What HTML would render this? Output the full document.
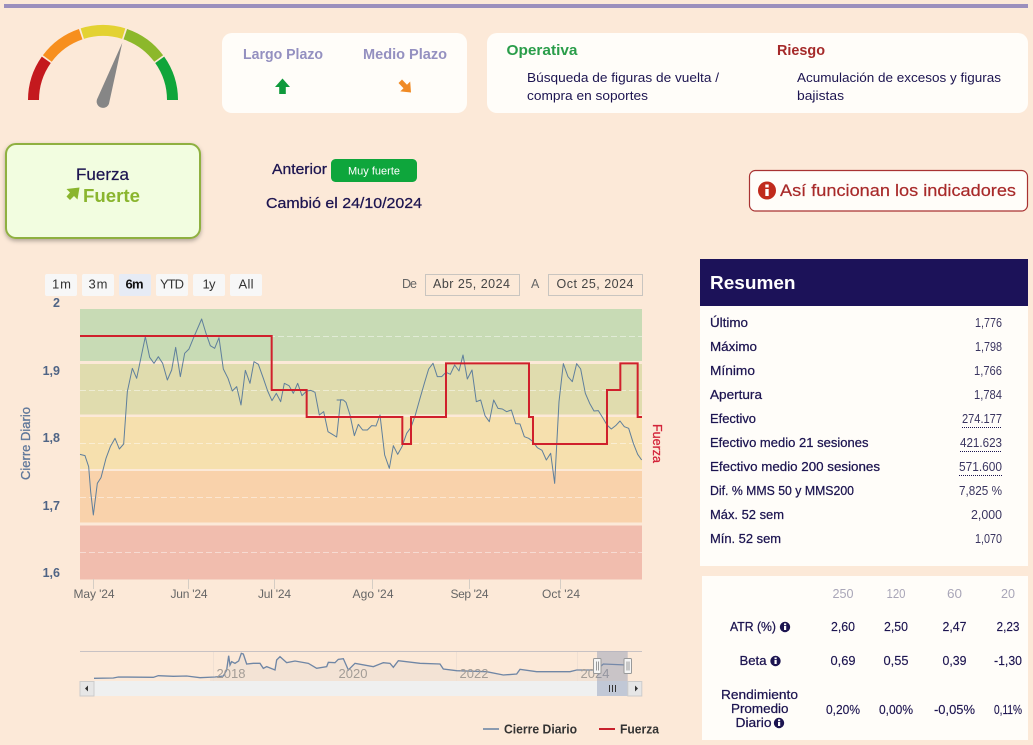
<!DOCTYPE html>
<html lang="es">
<head>
<meta charset="utf-8">
<title>Fuerza - Resumen</title>
<style>
html,body{margin:0;padding:0;width:1033px;height:745px;overflow:hidden;background:#fce9d8}
svg{display:block}
text{font-family:"Liberation Sans",sans-serif;fill:#1c1450}
.m{stroke:#1c1450;stroke-width:.25px;font-size:13px}
.v{font-size:13px;fill:#3a3560;text-anchor:start}
.h{font-size:13px;fill:#a9a6b8;text-anchor:middle}
.n{font-size:13px;text-anchor:middle;stroke:#1c1450;stroke-width:.15px}
.b{font-size:13px;fill:#333;text-anchor:middle}
.ax{font-size:12.5px;fill:#4f6485;font-weight:bold;text-anchor:end}
.xl{font-size:12px;fill:#666;text-anchor:middle}
.nv{font-size:13px;fill:#a39d97;text-anchor:middle}
.d{font-size:12.5px;fill:#444}
</style>
</head>
<body>
<svg width="1033" height="745" viewBox="0 0 1033 745" xmlns="http://www.w3.org/2000/svg">
<defs>
<filter id="sh" x="-10%" y="-10%" width="120%" height="125%"><feDropShadow dx="0" dy="2" stdDeviation="2" flood-color="#000" flood-opacity=".3"/></filter>
<g id="inf"><circle r="5.2" fill="#1c1450"/><rect x="-1" y="-1" width="2.2" height="4" fill="#fff"/><rect x="-1" y="-3.6" width="2.2" height="1.8" fill="#fff"/></g>
</defs>
<rect width="1033" height="745" fill="#fce9d8"/>
<rect x="4" y="4" width="1024" height="4" fill="#9b8fbd"/>

<!-- gauge -->
<g fill="none" stroke-width="11">
<path d="M33.5 100A69.5 69.5 0 0 1 46.3 59.8" stroke="#c4191e"/>
<path d="M47.3 58.5A69.5 69.5 0 0 1 80.7 34.2" stroke="#f78f1e"/>
<path d="M82.3 33.6A69.5 69.5 0 0 1 123.7 33.6" stroke="#e3d232"/>
<path d="M125.3 34.2A69.5 69.5 0 0 1 158.7 58.5" stroke="#8cb82b"/>
<path d="M159.7 59.8A69.5 69.5 0 0 1 172.5 100" stroke="#0fa53a"/>
</g>
<path d="M122.3 42.7L109 103.6A6.2 6.2 0 0 1 97 99.4Z" fill="#868686"/>

<!-- plazo card -->
<rect x="222" y="33" width="245" height="80" rx="10" fill="#fffdf9"/>
<text x="243" y="59" font-size="15" font-weight="bold" style="fill:#9490c0" textLength="80" lengthAdjust="spacingAndGlyphs">Largo Plazo</text>
<text x="363" y="59" font-size="15" font-weight="bold" style="fill:#9490c0" textLength="84" lengthAdjust="spacingAndGlyphs">Medio Plazo</text>
<path d="M282.5 78.5L290 87H285.8V94H279.2V87H275Z" fill="#0f9a3c"/>
<path d="M411 92.5L410.2 81.5L407 84.7L402 79.5L398.5 83L403.5 88.2L400.3 91.4Z" fill="#f08a24"/>

<!-- operativa card -->
<rect x="487" y="33" width="541" height="80" rx="10" fill="#fffdf9"/>
<text x="506.5" y="55" font-size="15" font-weight="bold" style="fill:#2a9d4a" textLength="71" lengthAdjust="spacingAndGlyphs">Operativa</text>
<text x="777" y="55" font-size="15" font-weight="bold" style="fill:#a52a2a" textLength="48" lengthAdjust="spacingAndGlyphs">Riesgo</text>
<text x="527" y="82" font-size="13" textLength="192" lengthAdjust="spacingAndGlyphs">Búsqueda de figuras de vuelta /</text>
<text x="527" y="100" font-size="13" textLength="121" lengthAdjust="spacingAndGlyphs">compra en soportes</text>
<text x="797" y="82" font-size="13" textLength="204" lengthAdjust="spacingAndGlyphs">Acumulación de excesos y figuras</text>
<text x="797" y="100" font-size="13" textLength="47" lengthAdjust="spacingAndGlyphs">bajistas</text>

<!-- fuerza card -->
<rect x="6" y="144" width="194" height="94" rx="10" fill="#f2fde0" stroke="#8fb040" stroke-width="2" filter="url(#sh)"/>
<text x="76" y="180" font-size="16.5" style="stroke:#1c1450;stroke-width:.2px" textLength="53" lengthAdjust="spacingAndGlyphs">Fuerza</text>
<path d="M79.5 187.5L66.5 189L70 192.5L66.5 196.5L70 200L74 196L77.5 199.5Z" fill="#8ab52e"/>
<text x="83" y="202" font-size="18.5" font-weight="bold" style="fill:#8ab52e" textLength="57" lengthAdjust="spacingAndGlyphs">Fuerte</text>

<text x="272" y="174" font-size="14.5" style="stroke:#1c1450;stroke-width:.25px" textLength="55" lengthAdjust="spacingAndGlyphs">Anterior</text>
<rect x="331" y="159" width="86" height="23" rx="4.5" fill="#0ea63c"/>
<text x="348" y="174.5" font-size="11" style="fill:#fff" textLength="52" lengthAdjust="spacingAndGlyphs">Muy fuerte</text>
<text x="266" y="208" font-size="14.5" style="stroke:#1c1450;stroke-width:.25px" textLength="156" lengthAdjust="spacingAndGlyphs">Cambió el 24/10/2024</text>

<!-- button -->
<rect x="749.5" y="170.5" width="278" height="40.5" rx="6" fill="#fffdf9" stroke="#a83232" stroke-width="1.2"/>
<circle cx="767" cy="190.5" r="9" fill="#c02a1c"/>
<rect x="765.3" y="189" width="3.4" height="7" fill="#fff"/><rect x="765.3" y="184.5" width="3.4" height="3" fill="#fff"/>
<text x="780" y="196" font-size="16.5" style="fill:#a82a2a;stroke:#a82a2a;stroke-width:.2px" textLength="236" lengthAdjust="spacingAndGlyphs">Así funcionan los indicadores</text>

<!-- range selector -->
<g fill="#f7f7f7">
<rect x="45" y="274" width="32" height="22" rx="2"/>
<rect x="82" y="274" width="32" height="22" rx="2"/>
<rect x="119" y="274" width="32" height="22" rx="2" fill="#e6ebf5"/>
<rect x="156" y="274" width="32" height="22" rx="2"/>
<rect x="193" y="274" width="32" height="22" rx="2"/>
<rect x="230" y="274" width="32" height="22" rx="2"/>
</g>
<text class="b" x="61.5" y="288.5" textLength="19">1m</text>
<text class="b" x="98" y="288.5" textLength="19">3m</text>
<text class="b" x="134.5" y="288.5" font-weight="bold" style="fill:#111" textLength="18">6m</text>
<text class="b" x="172" y="288.5" textLength="24">YTD</text>
<text class="b" x="209" y="288.5" textLength="13">1y</text>
<text class="b" x="246" y="288.5" textLength="15">All</text>

<text class="d" x="402" y="288" style="fill:#666" textLength="15">De</text>
<rect x="425.5" y="274.5" width="94" height="21" fill="none" stroke="#c9c5c0"/>
<text class="d" x="433" y="288" textLength="77">Abr 25, 2024</text>
<text class="d" x="531" y="288" style="fill:#666" textLength="8">A</text>
<rect x="548.5" y="274.5" width="94" height="21" fill="none" stroke="#c9c5c0"/>
<text class="d" x="556.5" y="288" textLength="77">Oct 25, 2024</text>

<!-- plot bands -->
<rect x="80" y="309" width="562" height="52" fill="#c8dbb5"/>
<rect x="80" y="364" width="562" height="50.5" fill="#e0dcae"/>
<rect x="80" y="417" width="562" height="52" fill="#f6e0ae"/>
<rect x="80" y="471" width="562" height="51.5" fill="#f9d2ab"/>
<rect x="80" y="525.5" width="562" height="54" fill="#f1bdae"/>
<g stroke="#fff" stroke-opacity=".45" stroke-dasharray="6 3">
<path d="M80 336.5H642"/><path d="M80 390.5H642"/><path d="M80 443.5H642"/><path d="M80 497.5H642"/><path d="M80 552.5H642"/>
</g>

<!-- ticks -->
<g stroke="#d5cdc4"><path d="M93.5 579V589M188.5 579V589M274.5 579V589M372.5 579V589M469.5 579V589M560.5 579V589"/></g>

<!-- axis labels -->
<text class="ax" x="60" y="307">2</text>
<text class="ax" x="60" y="375">1,9</text>
<text class="ax" x="60" y="442">1,8</text>
<text class="ax" x="60" y="510">1,7</text>
<text class="ax" x="60" y="577">1,6</text>
<text transform="translate(30 443.5) rotate(-90)" font-size="13" text-anchor="middle" style="fill:#5f779a;stroke:#5f779a;stroke-width:.3px" textLength="73" lengthAdjust="spacingAndGlyphs">Cierre Diario</text>
<text transform="translate(653 443.5) rotate(90)" font-size="13" text-anchor="middle" style="fill:#d3243a;stroke:#d3243a;stroke-width:.3px" textLength="39" lengthAdjust="spacingAndGlyphs">Fuerza</text>
<text class="xl" x="94" y="598" textLength="41">May '24</text>
<text class="xl" x="189" y="598" textLength="37">Jun '24</text>
<text class="xl" x="274.5" y="598" textLength="33">Jul '24</text>
<text class="xl" x="373" y="598" textLength="41">Ago '24</text>
<text class="xl" x="469.5" y="598" textLength="38">Sep '24</text>
<text class="xl" x="561" y="598" textLength="38">Oct '24</text>

<!-- price line -->
<g transform="translate(0 265) scale(.33333)" fill="none" stroke="#5f7f9c" stroke-width="3" stroke-linejoin="round">
<polyline points="240,568 255,572 266,605 272,680 280,750 292,655 303,638 318,580 331,545 345,520 358,552 371,537 382,380 397,310 410,340 436,215 449,277 462,295 475,275 488,295 502,345 515,315 527,247 541,335 554,265 567,252 580,220 605,162 618,205 631,242 644,250 657,218 670,312 684,340 697,378 710,365 723,420 736,316 750,355 762,290 775,298 790,340 803,378 816,407 829,385 842,410 853,355 867,362 880,385 893,355 906,392 920,378 932,376 945,382 958,450 971,440 984,500 997,508 1010,516 1022,404 1030,405"/>
</g>
<g transform="translate(340 265) scale(.33333)" fill="none" stroke="#5f7f9c" stroke-width="3" stroke-linejoin="round">
<polyline points="-10,405 10,405 18,412 30,450 43,512 55,478 68,495 82,495 95,482 108,483 120,450 134,570 148,610 160,542 173,568 186,545 200,505 213,487 226,450 240,400 253,355 266,312 279,295 292,335 305,335 318,322 331,328 344,300 357,318 369,270 382,342 396,315 409,410 422,405 435,452 448,470 461,405 474,430 487,432 500,440 514,435 527,476 540,477 553,515 566,520 579,530 592,548 606,556 619,585 632,565 644,655 657,410 670,296 684,335 697,350 710,296 722,312 736,385 749,415 762,438 775,437 788,458 801,480 814,492 827,482 840,468 853,485 866,490 880,535 893,568 905,585"/>
</g>
<!-- fuerza step line -->
<g transform="translate(0 265) scale(.33333)" fill="none" stroke="#d0202c" stroke-width="6">
<path d="M240 213H815V375H920V456H1207V537H1233V456H1338V295H1587V456H1599V537H1821V375H1861V295H1913V456H1926"/>
</g>

<!-- navigator -->
<g transform="translate(0 500) scale(.33333)">
<polygon fill="#f3e3d5" points="630,543 630,531 645,531 670,528 680,510 686,467 690,495 695,485 705,490 716,483 724,460 730,462 740,492 760,490 780,490 790,505 800,500 825,510 830,480 840,470 860,488 885,483 925,490 950,505 980,500 985,487 1005,488 1015,478 1030,476 1045,510 1065,490 1120,500 1150,488 1170,490 1180,502 1195,482 1260,490 1320,492 1330,507 1370,512 1460,515 1510,525 1550,522 1560,508 1610,515 1710,515 1730,510 1791,510 1791,543"/>
</g>
<path d="M80 651.5H642" stroke="#c8c2c4" fill="none"/>
<path d="M456.5 652V681M577.5 652V681M213.5 652V681" stroke="#f0e0d3" fill="none"/>
<g transform="translate(0 500) scale(.33333)" fill="none" stroke="#6f86a5" stroke-width="4">
<polyline points="282,535 340,534 355,531 460,532 475,527 520,529 560,528 600,533 645,531 670,528 680,510 686,467 690,495 695,485 705,490 716,483 724,460 730,462 740,492 760,490 780,490 790,505 800,500 825,510 830,480 840,470 860,488 885,483 925,490 950,505 980,500 985,487 1005,488 1015,478 1030,476 1045,510 1065,490 1120,500 1150,488 1170,490 1180,502 1195,482 1260,490 1320,492 1330,507 1370,512 1460,515 1510,525 1550,522 1560,508 1610,515 1710,515 1730,510 1790,510 1810,492 1880,495"/>
</g>
<text class="nv" x="231" y="678">2018</text>
<text class="nv" x="353" y="678">2020</text>
<text class="nv" x="474" y="678">2022</text>
<text class="nv" x="595" y="678">2024</text>
<rect x="80" y="681" width="562" height="15" fill="#eff0f0"/>
<rect x="597" y="651.5" width="30.7" height="44.5" fill="#7c8bb0" fill-opacity=".4"/>
<rect x="80" y="681.5" width="14" height="14.5" fill="#e6e6e6" stroke="#ccc"/>
<path d="M85 688.5L88 685.5V691.5Z" fill="#333"/>
<rect x="627.8" y="681.5" width="14" height="14.5" fill="#e6e6e6" stroke="#ccc"/>
<path d="M638 688.5L635 685.5V691.5Z" fill="#333"/>
<path d="M609.5 685V692M612.5 685V692M615.5 685V692" stroke="#333"/>
<rect x="593.5" y="658.5" width="7.5" height="15" rx="1" fill="#f5f5f5" stroke="#999"/>
<path d="M596.5 661.5V670.5M598.5 661.5V670.5" stroke="#999"/>
<rect x="624" y="658.5" width="7.5" height="15" rx="1" fill="#f5f5f5" stroke="#999"/>
<path d="M627 661.5V670.5M629 661.5V670.5" stroke="#999"/>

<!-- legend -->
<path d="M483 729H499" stroke="#8b9bb0" stroke-width="2"/>
<text x="504" y="733.5" font-size="12.5" font-weight="bold" style="fill:#333" textLength="73" lengthAdjust="spacingAndGlyphs">Cierre Diario</text>
<path d="M599 729H615" stroke="#c8202c" stroke-width="2"/>
<text x="620" y="733.5" font-size="12.5" font-weight="bold" style="fill:#333" textLength="39" lengthAdjust="spacingAndGlyphs">Fuerza</text>

<!-- resumen -->
<rect x="700" y="259" width="328" height="47" fill="#1c1259"/>
<text x="710" y="289" font-size="18.5" font-weight="bold" style="fill:#fff" textLength="85.5" lengthAdjust="spacingAndGlyphs">Resumen</text>
<rect x="700" y="306" width="328" height="260" fill="#fffdf9"/>
<text class="m" x="710" y="327" textLength="38" lengthAdjust="spacingAndGlyphs">Último</text>
<text class="m" x="710" y="351" textLength="47" lengthAdjust="spacingAndGlyphs">Máximo</text>
<text class="m" x="710" y="375" textLength="45" lengthAdjust="spacingAndGlyphs">Mínimo</text>
<text class="m" x="710" y="399" textLength="52" lengthAdjust="spacingAndGlyphs">Apertura</text>
<text class="m" x="710" y="423" textLength="46" lengthAdjust="spacingAndGlyphs">Efectivo</text>
<text class="m" x="710" y="447" textLength="158.5" lengthAdjust="spacingAndGlyphs">Efectivo medio 21 sesiones</text>
<text class="m" x="710" y="471" textLength="170" lengthAdjust="spacingAndGlyphs">Efectivo medio 200 sesiones</text>
<text class="m" x="710" y="495" textLength="144" lengthAdjust="spacingAndGlyphs">Dif. % MMS 50 y MMS200</text>
<text class="m" x="710" y="519" textLength="74" lengthAdjust="spacingAndGlyphs">Máx. 52 sem</text>
<text class="m" x="710" y="543" textLength="71" lengthAdjust="spacingAndGlyphs">Mín. 52 sem</text>
<text class="v" x="975" y="327" textLength="27" lengthAdjust="spacingAndGlyphs">1,776</text>
<text class="v" x="975" y="351" textLength="27" lengthAdjust="spacingAndGlyphs">1,798</text>
<text class="v" x="974" y="375" textLength="28" lengthAdjust="spacingAndGlyphs">1,766</text>
<text class="v" x="974" y="399" textLength="28" lengthAdjust="spacingAndGlyphs">1,784</text>
<text class="v" x="962" y="423" textLength="40" lengthAdjust="spacingAndGlyphs">274.177</text>
<text class="v" x="960" y="447" textLength="42" lengthAdjust="spacingAndGlyphs">421.623</text>
<text class="v" x="959" y="471" textLength="43" lengthAdjust="spacingAndGlyphs">571.600</text>
<text class="v" x="959" y="495" textLength="43" lengthAdjust="spacingAndGlyphs">7,825 %</text>
<text class="v" x="971" y="519" textLength="31" lengthAdjust="spacingAndGlyphs">2,000</text>
<text class="v" x="975" y="543" textLength="27" lengthAdjust="spacingAndGlyphs">1,070</text>
<g stroke="#1c1450" stroke-dasharray="1 1" fill="none">
<path d="M962 427.5H1002M960 451.5H1002M959 475.5H1002"/>
</g>

<!-- stats table -->
<rect x="702" y="576" width="326" height="164" fill="#fffdf9"/>
<text class="h" x="843" y="598" textLength="21" lengthAdjust="spacingAndGlyphs">250</text>
<text class="h" x="896" y="598" textLength="19" lengthAdjust="spacingAndGlyphs">120</text>
<text class="h" x="954.5" y="598" textLength="15" lengthAdjust="spacingAndGlyphs">60</text>
<text class="h" x="1008" y="598" textLength="14" lengthAdjust="spacingAndGlyphs">20</text>
<text class="m" x="730" y="631" textLength="46" lengthAdjust="spacingAndGlyphs">ATR (%)</text>
<use href="#inf" x="785" y="627"/>
<text class="m" x="739.5" y="665" textLength="27" lengthAdjust="spacingAndGlyphs">Beta</text>
<use href="#inf" x="775.5" y="661"/>
<text class="m" x="721" y="699" textLength="77" lengthAdjust="spacingAndGlyphs">Rendimiento</text>
<text class="m" x="731" y="713" textLength="57.5" lengthAdjust="spacingAndGlyphs">Promedio</text>
<text class="m" x="735.5" y="727" textLength="36" lengthAdjust="spacingAndGlyphs">Diario</text>
<use href="#inf" x="779" y="723"/>
<text class="n" x="843" y="631" textLength="24" lengthAdjust="spacingAndGlyphs">2,60</text>
<text class="n" x="896" y="631" textLength="24" lengthAdjust="spacingAndGlyphs">2,50</text>
<text class="n" x="954.5" y="631" textLength="24" lengthAdjust="spacingAndGlyphs">2,47</text>
<text class="n" x="1008" y="631" textLength="23" lengthAdjust="spacingAndGlyphs">2,23</text>
<text class="n" x="843" y="665" textLength="25" lengthAdjust="spacingAndGlyphs">0,69</text>
<text class="n" x="896" y="665" textLength="25" lengthAdjust="spacingAndGlyphs">0,55</text>
<text class="n" x="954.5" y="665" textLength="24" lengthAdjust="spacingAndGlyphs">0,39</text>
<text class="n" x="1008" y="665" textLength="28" lengthAdjust="spacingAndGlyphs">-1,30</text>
<text class="n" x="843" y="714" textLength="34" lengthAdjust="spacingAndGlyphs">0,20%</text>
<text class="n" x="896" y="714" textLength="34" lengthAdjust="spacingAndGlyphs">0,00%</text>
<text class="n" x="954.5" y="714" textLength="41" lengthAdjust="spacingAndGlyphs">-0,05%</text>
<text class="n" x="1008" y="714" textLength="28" lengthAdjust="spacingAndGlyphs">0,11%</text>
</svg>
</body>
</html>
